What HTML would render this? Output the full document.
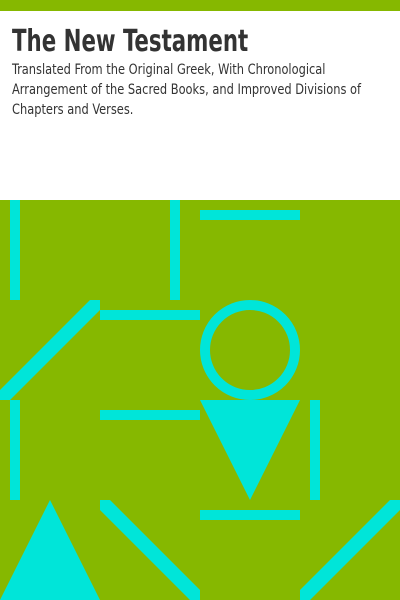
<!DOCTYPE html>
<html><head><style>
body{margin:0;width:400px;height:600px;overflow:hidden;background:#fff;position:relative;font-family:"DejaVu Sans Condensed","DejaVu Sans","Liberation Sans",sans-serif}
.top{position:absolute;left:0;top:0;width:400px;height:11px;background:#86b800}
h1{position:absolute;left:12px;top:24px;margin:0;font-size:30px;font-weight:bold;color:#333;transform:scaleX(0.79);transform-origin:0 0;white-space:nowrap}
p{position:absolute;left:12px;top:60px;margin:0;font-size:14.5px;line-height:20px;color:#333;width:440px;transform:scaleX(0.875);transform-origin:0 0}
svg{position:absolute;left:0;top:200px}
</style></head><body>
<div class="top"></div>
<h1>The New Testament</h1>
<p>Translated From the Original Greek, With Chronological<br>Arrangement of the Sacred Books, and Improved Divisions of<br>Chapters and Verses.</p>
<svg width="400" height="400" viewBox="0 200 400 400">
<rect x="0" y="200" width="400" height="400" fill="#86b800"/>
<g fill="#00e5d9">
<rect x="10" y="200" width="10" height="100"/>
<rect x="170" y="200" width="10" height="100"/>
<rect x="200" y="210" width="100" height="10"/>
<polygon points="90,300 100,300 100,310 10,400 0,400 0,390"/>
<rect x="100" y="310" width="100" height="10"/>
<rect x="10" y="400" width="10" height="100"/>
<rect x="100" y="410" width="100" height="10"/>
<polygon points="200,400 300,400 250,500"/>
<rect x="310" y="400" width="10" height="100"/>
<rect x="200" y="510" width="100" height="10"/>
<polygon points="50,500 100,600 0,600"/>
<polygon points="100,500 110,500 200,590 200,600 190,600 100,510"/>
<polygon points="390,500 400,500 400,510 310,600 300,600 300,590"/>
</g>
<circle cx="250" cy="350" r="45" fill="none" stroke="#00e5d9" stroke-width="10"/>
</svg>
</body></html>
